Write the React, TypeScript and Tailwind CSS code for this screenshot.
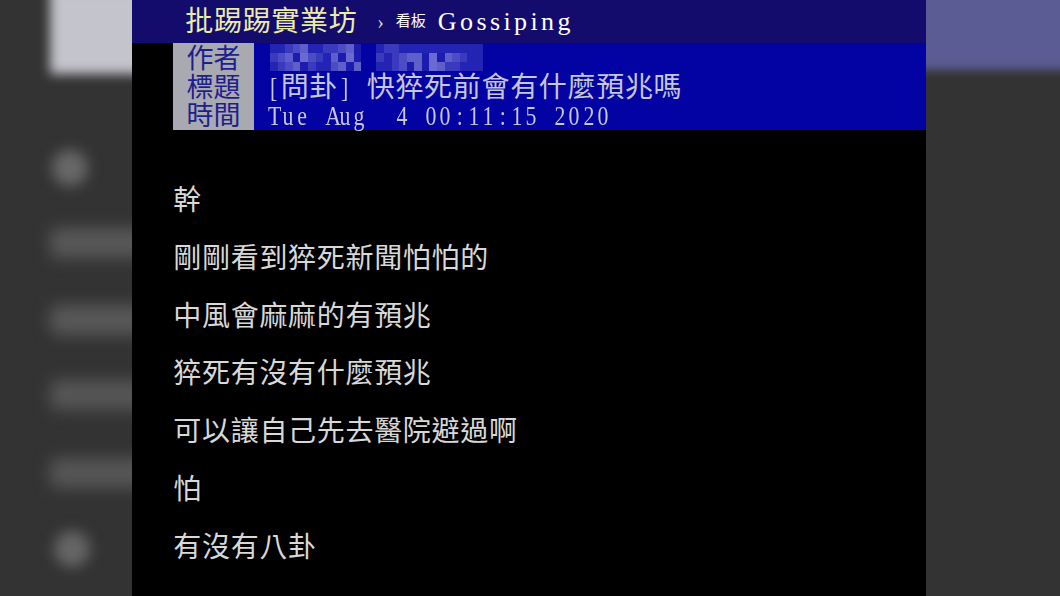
import React from 'react';

const isWide = (ch: string) => ch.charCodeAt(0) > 0x2e80;

// terminal-ish cell renderer: full-width chars take two columns
function Cells({ text }: { text: string }) {
  return (
    <>
      {Array.from(text).map((ch, i) =>
        isWide(ch) ? (
          <span key={i} className="inline-block text-center w-[28.7px]">
            {ch}
          </span>
        ) : (
          <span key={i} className="inline-block text-center w-[14.35px]">
            <span className="inline-block scale-x-[0.78]">{ch === ' ' ? '\u00a0' : ch}</span>
          </span>
        )
      )}
    </>
  );
}

const pixelShades = [
  'bg-[#2424b4]',
  'bg-[#3a3abf]',
  'bg-[#4c4cc6]',
  'bg-[#5f5fcc]',
  'bg-[#1c1cae]',
  'bg-[#6a6ad2]',
];

const pixelRows = [
  '0012300112343201100000000000',
  '1234521034543210123345432100',
  '0123410023432100124345311000',
];

const bodyLines = [
  '幹',
  '剛剛看到猝死新聞怕怕的',
  '中風會麻麻的有預兆',
  '猝死有沒有什麼預兆',
  '可以讓自己先去醫院避過啊',
  '怕',
  '有沒有八卦',
];

export default function App() {
  return (
    <div className="flex w-[1060px] h-[596px] bg-[#333333] overflow-hidden font-['Liberation_Serif','Noto_Sans_CJK_TC',serif]">
      {/* blurred page behind, left side */}
      <div className="w-[132px] shrink-0 overflow-hidden flex flex-col pl-[50px]">
        <div className="-mt-[12px] h-[86px] w-[110px] bg-[#c4c4cc] blur-[6px]" />
        <div className="mt-[76px] ml-[2px] w-[36px] h-[36px] rounded-full bg-[#686868] blur-[7px]" />
        <div className="mt-[42px] h-[30px] w-[110px] rounded-lg bg-[#585858] blur-[8px]" />
        <div className="mt-[47px] h-[30px] w-[110px] rounded-lg bg-[#585858] blur-[8px]" />
        <div className="mt-[45px] h-[30px] w-[110px] rounded-lg bg-[#565656] blur-[8px]" />
        <div className="mt-[48px] h-[30px] w-[110px] rounded-lg bg-[#565656] blur-[8px]" />
        <div className="mt-[43px] ml-[4px] w-[36px] h-[36px] rounded-full bg-[#666666] blur-[7px]" />
      </div>

      {/* PTT article */}
      <div className="w-[794px] shrink-0 bg-black flex flex-col">
        <div className="h-[43px] bg-[#140c6c] flex items-center pl-[53px]">
          <span className="text-[28px] leading-none text-[#ececa8]">
            <Cells text="批踢踢實業坊" />
          </span>
          <span className="ml-[20px] text-[20px] leading-none text-[#d8d8e0]">›</span>
          <span className="ml-[12px] text-[15px] text-white">看板</span>
          <span className="ml-[12px] text-[26px] leading-none text-white tracking-[3.4px]">Gossiping</span>
        </div>

        <div className="flex h-[87px]">
          <div className="ml-[41px] w-[81px] bg-[#a9a9b1] flex flex-col items-center pt-[2px] text-[27px] leading-[28.5px] text-[#1e1e8c]">
            <span>作者</span>
            <span>標題</span>
            <span>時間</span>
          </div>
          <div className="flex-1 bg-[#0303a3] pl-[12px] text-[28px] leading-[29px] text-[#c6c6d4] whitespace-nowrap">
            <div className="h-[29px] flex flex-col pt-[1px] pl-[4px] blur-[0.6px]">
              {pixelRows.map((row, r) => (
                <div key={r} className="flex">
                  {Array.from(row).map((c, i) => (
                    <div
                      key={i}
                      className={`w-[7.6px] h-[9px] ${i >= 12 && i <= 13 ? 'bg-[#0303a3]' : pixelShades[Number(c)]}`}
                    />
                  ))}
                </div>
              ))}
            </div>
            <div className="h-[29px] pt-[1px]">
              <Cells text="[問卦] 快猝死前會有什麼預兆嗎" />
            </div>
            <div className="h-[29px]">
              <Cells text="Tue Aug  4 00:11:15 2020" />
            </div>
          </div>
        </div>

        <div className="pt-[42px] pl-[41px] text-[28px] leading-[57.75px] text-[#d8d8d8]">
          {bodyLines.map((line, i) => (
            <div key={i} className="whitespace-nowrap">
              <Cells text={line} />
            </div>
          ))}
        </div>
      </div>

      {/* blurred page behind, right side */}
      <div className="flex-1 overflow-hidden">
        <div className="-mt-[12px] -mx-[12px] h-[82px] bg-[#5c5c94] blur-[5px]" />
      </div>
    </div>
  );
}
